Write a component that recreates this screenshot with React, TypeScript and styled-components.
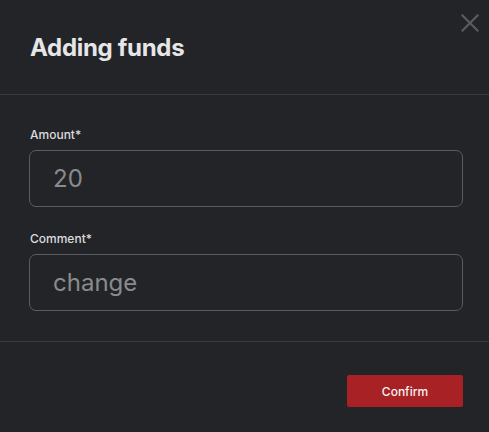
import React from "react";
import styled, { createGlobalStyle } from "styled-components";

const Global = createGlobalStyle`
  html, body { margin: 0; padding: 0; background: #232428; }
  body { font-family: Inter, "Noto Sans", sans-serif; -webkit-font-smoothing: antialiased; }
  * { box-sizing: border-box; }
`;

const Modal = styled.div`
  position: relative;
  width: 489px;
  height: 432px;
  background: #232428;
  display: flex;
  flex-direction: column;
`;

const Header = styled.div`
  height: 95px;
  padding: 0 26px 0 30px;
  display: flex;
  align-items: flex-start;
  border-bottom: 1px solid #38393d;
`;

const Title = styled.h2`
  margin: 33px 0 0;
  font-size: 24px;
  line-height: 30px;
  font-weight: 700;
  color: #e6e6e7;
  letter-spacing: -0.3px;
`;

const Close = styled.button`
  position: absolute;
  top: 13px;
  right: 9px;
  width: 20px;
  height: 20px;
  padding: 0;
  border: none;
  background: transparent;
  display: flex;
  align-items: center;
  justify-content: center;
  cursor: pointer;
`;

const Body = styled.div`
  padding: 32px 26px 30px 29px;
  display: flex;
  flex-direction: column;
  gap: 24px;
  border-bottom: 1px solid #38393d;
`;

const Field = styled.label`
  display: flex;
  flex-direction: column;
  gap: 7px;
`;

const Label = styled.span`
  font-size: 12px;
  line-height: 16px;
  font-weight: 500;
  color: #dcdcdd;
  padding-left: 1px;
`;

const Input = styled.input`
  width: 100%;
  height: 57px;
  padding: 0 23px;
  border: 1px solid #5b5c60;
  border-radius: 7px;
  background: transparent;
  font-family: Inter, "Noto Sans", sans-serif;
  font-size: 24px;
  font-weight: 400;
  color: #8a8b8d;
  outline: none;
`;

const Footer = styled.div`
  flex: 1;
  padding: 33px 26px 0 29px;
  display: flex;
  justify-content: flex-end;
  align-items: flex-start;
`;

const ConfirmButton = styled.button`
  width: 116px;
  height: 32px;
  border: none;
  border-radius: 2px;
  background: #a82124;
  color: #f4f4f4;
  font-family: Inter, "Noto Sans", sans-serif;
  font-size: 12px;
  font-weight: 500;
  cursor: pointer;
`;

export default function App() {
  return (
    <>
      <Global />
      <Modal>
        <Header>
          <Title>Adding funds</Title>
        </Header>
        <Close aria-label="Close">
          <svg width="18" height="18" viewBox="0 0 18 18">
            <path d="M1.5 1.5 L16.5 16.5 M16.5 1.5 L1.5 16.5" stroke="#5a5b5f" strokeWidth="2.2" strokeLinecap="square" />
          </svg>
        </Close>
        <Body>
          <Field>
            <Label>Amount*</Label>
            <Input defaultValue="20" />
          </Field>
          <Field>
            <Label>Comment*</Label>
            <Input defaultValue="change" />
          </Field>
        </Body>
        <Footer>
          <ConfirmButton>Confirm</ConfirmButton>
        </Footer>
      </Modal>
    </>
  );
}
